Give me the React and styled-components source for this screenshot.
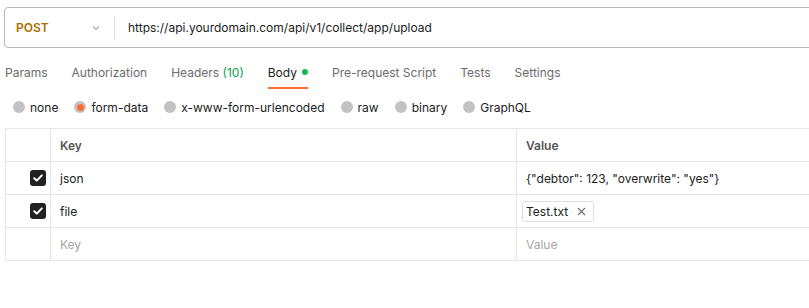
import React from 'react'
import styled, { createGlobalStyle } from 'styled-components'

const Global = createGlobalStyle`
  body {
    margin: 0;
    background: #ffffff;
    font-family: Inter, "Noto Sans", sans-serif;
    font-size: 12px;
    color: #212121;
  }
`

const Page = styled.div`
  width: 809px;
  height: 308px;
  overflow: hidden;
  padding-left: 4px;
  box-sizing: border-box;
`

const UrlBar = styled.div`
  margin-top: 7px;
  width: 830px;
  height: 41px;
  box-sizing: border-box;
  border: 1px solid #b8b8b8;
  border-radius: 4px;
  display: flex;
  align-items: center;
`

const Method = styled.div`
  width: 84px;
  padding: 0 14px 0 11px;
  display: flex;
  align-items: center;
  justify-content: space-between;
  font-weight: 600;
  color: #a86f00;
  font-size: 12px;
`

const Divider = styled.div`
  width: 1px;
  height: 24px;
  background: #e2e2e2;
`

const Url = styled.div`
  padding-left: 13px;
  color: #212121;
`

const Tabs = styled.div`
  margin-top: 8px;
  display: flex;
  gap: 24px;
  padding-left: 1px;
`

const Tab = styled.div`
  height: 30px;
  padding-top: 1px;
  display: flex;
  align-items: center;
  gap: 5px;
  color: ${p => (p.$active ? '#212121' : '#6b6b6b')};
  border-bottom: 2px solid ${p => (p.$active ? '#ff6c37' : 'transparent')};
`

const Count = styled.span`
  color: #0b9f4b;
`

const Dot = styled.span`
  width: 6px;
  height: 6px;
  border-radius: 50%;
  background: #0cbb52;
`

const Radios = styled.div`
  margin-top: 8px;
  height: 20px;
  display: flex;
  align-items: center;
  gap: 16px;
  padding-left: 9px;
`

const RadioItem = styled.label`
  display: flex;
  align-items: center;
  gap: 5px;
  color: #212121;
`

const Radio = styled.span`
  width: 12px;
  height: 12px;
  border-radius: 50%;
  background: #c2c2c2;
  display: flex;
  align-items: center;
  justify-content: center;
  &::after {
    content: '';
    display: ${p => (p.$checked ? 'block' : 'none')};
    width: 7px;
    height: 7px;
    border-radius: 50%;
    background: #ff6c37;
  }
`

const Table = styled.div`
  margin-top: 11px;
  margin-left: 1px;
  width: 830px;
  display: grid;
  grid-template-columns: 45px 466px 1fr;
  grid-auto-rows: 33px;
  border-top: 1px solid #e6e6e6;
  border-left: 1px solid #e6e6e6;
`

const Cell = styled.div`
  border-right: 1px solid #e6e6e6;
  border-bottom: 1px solid #e6e6e6;
  display: flex;
  align-items: center;
  padding-left: ${p => (p.$chip ? '5px' : '9px')};
  color: ${p => (p.$head ? '#545454' : p.$placeholder ? '#a6a6a6' : '#212121')};
  font-weight: ${p => (p.$head ? 600 : 400)};
  min-width: 0;
  white-space: nowrap;
`

const CheckCell = styled.div`
  border-right: 1px solid #e6e6e6;
  border-bottom: 1px solid #e6e6e6;
  display: flex;
  align-items: center;
  justify-content: flex-end;
  padding-right: 4px;
`

const Check = styled.span`
  width: 16px;
  height: 16px;
  border-radius: 3px;
  background: #212121;
  display: flex;
  align-items: center;
  justify-content: center;
`

const Chip = styled.span`
  display: inline-flex;
  align-items: center;
  gap: 9px;
  height: 19px;
  padding: 0 7px 0 3px;
  border: 1px solid #e0e0e0;
  border-radius: 3px;
  color: #212121;
`

const Chevron = () => (
  <svg width="8" height="8" viewBox="0 0 8 8">
    <path d="M1 2.5 L4 5.5 L7 2.5" fill="none" stroke="#6b6b6b" strokeWidth="1" />
  </svg>
)

const Tick = () => (
  <svg width="12" height="12" viewBox="0 0 12 12">
    <path d="M2.2 6.2 L4.8 8.6 L9.8 3.4" fill="none" stroke="#fff" strokeWidth="2" strokeLinecap="round" strokeLinejoin="round" />
  </svg>
)

const Close = () => (
  <svg width="9" height="9" viewBox="0 0 9 9">
    <path d="M1 1 L8 8 M8 1 L1 8" stroke="#6b6b6b" strokeWidth="1.1" />
  </svg>
)

const tabs = ['Params', 'Authorization', 'Headers', 'Body', 'Pre-request Script', 'Tests', 'Settings']
const bodyTypes = ['none', 'form-data', 'x-www-form-urlencoded', 'raw', 'binary', 'GraphQL']

const App = () => {
  return (
    <Page>
      <Global />
      <UrlBar>
        <Method>
          POST
          <Chevron />
        </Method>
        <Divider />
        <Url>https://api.yourdomain.com/api/v1/collect/app/upload</Url>
      </UrlBar>

      <Tabs>
        {tabs.map(t => (
          <Tab key={t} $active={t === 'Body'}>
            {t === 'Headers' ? (
              <span>Headers <Count>(10)</Count></span>
            ) : (
              t
            )}
            {t === 'Body' && <Dot />}
          </Tab>
        ))}
      </Tabs>

      <Radios>
        {bodyTypes.map(b => (
          <RadioItem key={b}>
            <Radio $checked={b === 'form-data'} />
            {b}
          </RadioItem>
        ))}
      </Radios>

      <Table>
        <CheckCell />
        <Cell $head>Key</Cell>
        <Cell $head>Value</Cell>

        <CheckCell><Check><Tick /></Check></CheckCell>
        <Cell>json</Cell>
        <Cell>{'{"debtor": 123, "overwrite": "yes"}'}</Cell>

        <CheckCell><Check><Tick /></Check></CheckCell>
        <Cell>file</Cell>
        <Cell $chip>
          <Chip>Test.txt<Close /></Chip>
        </Cell>

        <CheckCell />
        <Cell $placeholder>Key</Cell>
        <Cell $placeholder>Value</Cell>
      </Table>
    </Page>
  )
}

export default App
